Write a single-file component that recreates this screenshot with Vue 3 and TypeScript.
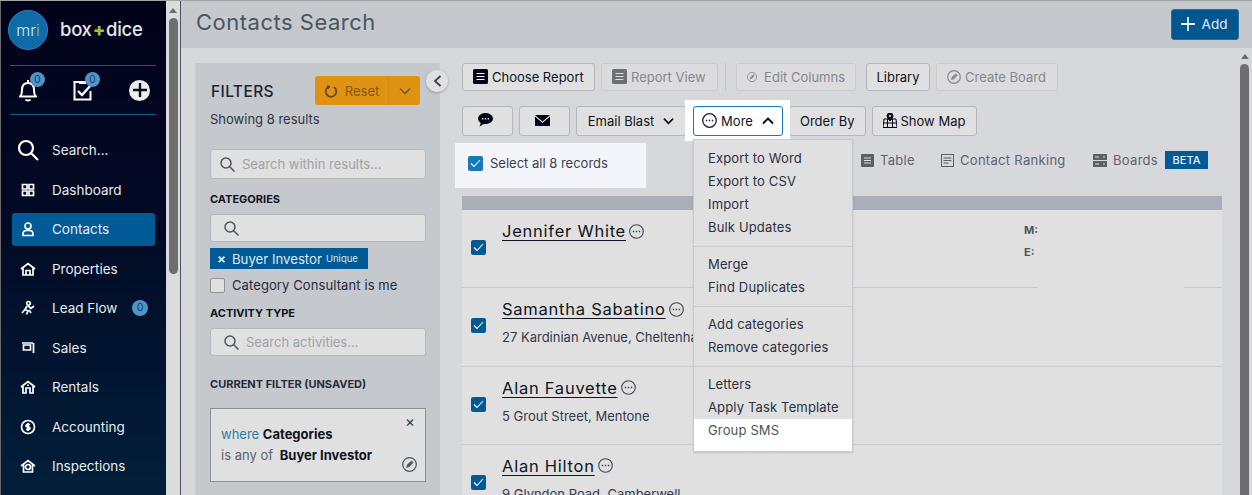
<template>
    <div class="page">
        <aside class="sidebar">
            <div class="brand">
                <div class="brand__circle">m<span>r</span><span class="brand__i">i</span></div>
                <div class="brand__name">box<span class="brand__plus">+</span>dice</div>
            </div>
            <div class="quick">
                <span class="quick__item quick__item--bell">
                    <svg width="22" height="24" viewBox="0 0 22 24" fill="none" stroke="#fff" stroke-width="2">
                        <path d="M3 18.500c1.700-1.500 2-3 2-6.500 0-4 2-7 6-7s6 3 6 7c0 3.500.3 5 2 6.500z" stroke-linejoin="round" />
                        <path d="M11 2v3" />
                        <path d="M8.500 21.500c.8 1.300 4.200 1.300 5 0" />
                    </svg>
                    <span class="quick__badge">0</span>
                </span>
                <span class="quick__item quick__item--task">
                    <svg width="22" height="24" viewBox="0 0 22 24" fill="none" stroke="#fff" stroke-width="2">
                        <path d="M7 4H2.500v17.500h16V13" />
                        <path d="M7 4.500h7" stroke-width="3" />
                        <path d="M6 13l4 4 9-10" stroke-width="2.400" />
                    </svg>
                    <span class="quick__badge">0</span>
                </span>
                <span class="quick__plus">
                    <svg width="14" height="14" viewBox="0 0 14 14" stroke="#0a0a20" stroke-width="2.400">
                        <path d="M7 0v14M0 7h14" />
                    </svg>
                </span>
            </div>
            <nav class="nav">
                <div
                    v-for="item in navItems"
                    :key="item.label"
                    class="nav__item"
                    :class="{ 'nav__item--active': item.label === 'Contacts' }"
                >
                    <span class="nav__icon">
                        <svg
                            :width="item.big ? 24 : 16"
                            :height="item.big ? 24 : 16"
                            :viewBox="item.big ? '0 0 24 24' : '0 0 16 16'"
                            fill="none"
                            stroke="#fff"
                            :stroke-width="item.big ? 2.2 : 1.7"
                        >
                            <path :d="item.icon" />
                        </svg>
                    </span>
                    <span>{{ item.label }}</span>
                    <span v-if="item.badge" class="nav__badge">0</span>
                </div>
            </nav>
        </aside>

        <div class="scrollbar scrollbar--left">
            <span class="scrollbar__arrow"></span>
            <span class="scrollbar__thumb scrollbar__thumb--left"></span>
        </div>

        <main class="main">
            <header class="header">
                <h1 class="header__title">Contacts Search</h1>
                <button class="add-btn">
                    <svg width="16" height="16" viewBox="0 0 16 16" stroke="#e8eef4" stroke-width="1.800">
                        <path d="M8 1v14M1 8h14" />
                    </svg>
                    Add
                </button>
            </header>

            <div class="body">
                <section class="filters">
                    <div class="filters__top">
                        <div class="filters__title">FILTERS</div>
                        <div class="reset">
                            <span class="reset__main">
                                <svg width="14" height="14" viewBox="0 0 14 14" fill="none" stroke="#5a4a28" stroke-width="1.800">
                                    <path d="M4.200 3A5.300 5.300 0 1 0 9.800 3" />
                                    <path d="M3 1.500l3 1-2 2.500" fill="#5a4a28" stroke-width="1" />
                                </svg>
                                Reset
                            </span>
                            <span class="reset__arrow">
                                <svg width="12" height="8" viewBox="0 0 12 8" fill="none" stroke="#7a5a20" stroke-width="1.600">
                                    <path d="M1 1.500l5 5 5-5" />
                                </svg>
                            </span>
                        </div>
                    </div>
                    <div class="filters__count">Showing 8 results</div>

                    <div class="field field--tall">
                        <svg class="field__icon" width="15" height="15" viewBox="0 0 15 15" fill="none" stroke="#4c5560" stroke-width="1.500">
                            <circle cx="6" cy="6" r="5" />
                            <path d="M9.500 9.500l5 5" />
                        </svg>
                        <span class="field__hint">Search within results...</span>
                    </div>

                    <div class="filters__label filters__label--cat">CATEGORIES</div>
                    <div class="field field--inset">
                        <svg class="field__icon" width="15" height="15" viewBox="0 0 15 15" fill="none" stroke="#4c5560" stroke-width="1.500">
                            <circle cx="6" cy="6" r="5" />
                            <path d="M9.500 9.500l5 5" />
                        </svg>
                    </div>
                    <div class="tag">
                        <span class="tag__x">×</span>
                        Buyer Investor
                        <span class="tag__small">Unique</span>
                    </div>
                    <label class="consultant">
                        <span class="consultant__box"></span>
                        Category Consultant is me
                    </label>

                    <div class="filters__label filters__label--act">ACTIVITY TYPE</div>
                    <div class="field field--inset">
                        <svg class="field__icon" width="15" height="15" viewBox="0 0 15 15" fill="none" stroke="#4c5560" stroke-width="1.500">
                            <circle cx="6" cy="6" r="5" />
                            <path d="M9.500 9.500l5 5" />
                        </svg>
                        <span class="field__hint">Search activities...</span>
                    </div>

                    <div class="filters__label filters__label--cur">CURRENT FILTER (UNSAVED)</div>
                    <div class="current">
                        <div class="current__line"><span class="current__where">where</span> <b>Categories</b></div>
                        <div class="current__line"><span class="current__is">is any of</span> <b>Buyer Investor</b></div>
                        <span class="current__x">×</span>
                        <svg class="current__edit" width="15" height="15" viewBox="0 0 15 15" fill="none" stroke="#4c5560" stroke-width="1.200">
                            <circle cx="7.500" cy="7.500" r="6.800" />
                            <path d="M4.500 10.500l1-3 4-3.500 1.500 1.500-3.500 4z" fill="#4c5560" stroke-width=".6" />
                        </svg>
                    </div>

                    <button class="collapse">
                        <svg width="9" height="12" viewBox="0 0 9 12" fill="none" stroke="#2f4058" stroke-width="1.800">
                            <path d="M7.500 1l-5.500 5 5.500 5" />
                        </svg>
                    </button>
                </section>

                <section class="content">
                    <div class="toolbar">
                        <button class="btn btn--choose">
                            <svg width="15" height="15" viewBox="0 0 15 15">
                                <rect width="15" height="15" rx="1.500" fill="#05051a" />
                                <path d="M3.500 4.500h8M3.500 7.500h8M3.500 10.500h8" stroke="#fff" stroke-width="1.200" />
                            </svg>
                            Choose Report
                        </button>
                        <button class="btn btn--off btn--view">
                            <svg width="15" height="15" viewBox="0 0 15 15">
                                <rect width="15" height="15" rx="1.500" fill="#6d7074" />
                                <path d="M3.500 4.500h8M3.500 7.500h8M3.500 10.500h8" stroke="#ddd" stroke-width="1.200" />
                            </svg>
                            Report View
                        </button>
                        <span class="toolbar__divider"></span>
                        <button class="btn btn--off btn--edit">
                            <svg width="14" height="14" viewBox="0 0 15 15" fill="none" stroke="#85888c" stroke-width="1.200">
                                <circle cx="7.500" cy="7.500" r="6.800" />
                                <path d="M4.500 10.500l1-3 4-3.500 1.500 1.500-3.500 4z" fill="#85888c" stroke-width=".6" />
                            </svg>
                            Edit Columns
                        </button>
                        <button class="btn btn--library">Library</button>
                        <button class="btn btn--off btn--board">
                            <svg width="14" height="14" viewBox="0 0 15 15" fill="none" stroke="#85888c" stroke-width="1.200">
                                <circle cx="7.500" cy="7.500" r="6.800" />
                                <path d="M4.500 10.500l1-3 4-3.500 1.500 1.500-3.500 4z" fill="#85888c" stroke-width=".6" />
                            </svg>
                            Create Board
                        </button>
                    </div>

                    <div class="toolbar toolbar--two">
                        <button class="btn btn--tall btn--icon">
                            <svg width="15" height="14" viewBox="0 0 15 14">
                                <path d="M7.500 0C3.300 0 0 2.500 0 5.600c0 1.800 1.100 3.300 2.800 4.300L1.500 13.500l4.200-2.600c.6.100 1.200.2 1.800.2 4.200 0 7.500-2.500 7.500-5.500S11.700 0 7.500 0z" fill="#05051a" />
                                <path d="M4 5.700h1.400M6.800 5.700h1.400M9.600 5.700H11" stroke="#e0e0e0" stroke-width="1.500" />
                            </svg>
                        </button>
                        <button class="btn btn--tall btn--icon">
                            <svg width="15" height="11" viewBox="0 0 15 11">
                                <path d="M0 0h15L7.500 6.500z" fill="#05051a" />
                                <path d="M0 1.500l7.500 6.500L15 1.500V11H0z" fill="#05051a" />
                            </svg>
                        </button>
                        <button class="btn btn--tall btn--blast">
                            Email Blast
                            <svg width="11" height="8" viewBox="0 0 12 8" fill="none" stroke="#05051a" stroke-width="1.800">
                                <path d="M1 1.500l5 5 5-5" />
                            </svg>
                        </button>
                        <div class="more-wrap">
                            <button class="btn btn--tall btn--more">
                                <svg width="15" height="15" viewBox="0 0 15 15" fill="none" stroke="#1a2438" stroke-width="1.300">
                                    <circle cx="7.500" cy="7.500" r="6.800" />
                                    <path d="M3.800 7.500h1.400M6.800 7.500h1.400M9.800 7.500h1.400" stroke-width="1.500" />
                                </svg>
                                More
                                <svg class="btn__caret" width="12" height="8" viewBox="0 0 12 8" fill="none" stroke="#05051a" stroke-width="1.800">
                                    <path d="M1 6.500l5-5 5 5" />
                                </svg>
                            </button>
                            <div class="menu">
                                <div v-for="(group, i) in menuGroups" :key="i" class="menu__group">
                                    <div
                                        v-for="label in group"
                                        :key="label"
                                        class="menu__item"
                                        :class="{ 'menu__item--hot': label === 'Group SMS' }"
                                    >
                                        {{ label }}
                                    </div>
                                </div>
                            </div>
                        </div>
                        <button class="btn btn--tall">Order By</button>
                        <button class="btn btn--tall btn--map">
                            <svg width="14" height="15" viewBox="0 0 14 15" fill="none" stroke="#05051a" stroke-width="1">
                                <path d="M1 6h12l1 8.500H0zM.5 10h13M4.500 6v8.500M9.500 6v8.500" />
                                <path d="M7 0a3 3 0 0 1 3 3c0 1.500-2 4-3 5-1-1-3-3.500-3-5a3 3 0 0 1 3-3z" fill="#05051a" />
                                <circle cx="7" cy="3" r="1" fill="#fff" stroke="none" />
                            </svg>
                            Show Map
                        </button>
                    </div>

                    <div class="views">
                        <label class="select-all">
                            <span class="check check--light">
                                <svg width="11" height="9" viewBox="0 0 11 9" fill="none" stroke="#fff" stroke-width="1.100">
                                    <path d="M1 4.500l3 3 6-6.500" />
                                </svg>
                            </span>
                            Select all 8 records
                        </label>
                        <div class="tabs">
                            <span class="tab tab--table">
                                <svg width="13" height="13" viewBox="0 0 13 13">
                                    <rect width="13" height="13" rx="1" fill="#5c5f66" />
                                    <path d="M3 4h7M3 6.500h7M3 9h7" stroke="#ddd" stroke-width="1" />
                                </svg>
                                Table
                            </span>
                            <span class="tab tab--rank">
                                <svg width="13" height="13" viewBox="0 0 13 13" fill="none" stroke="#5c5f66" stroke-width="1">
                                    <rect x=".5" y=".5" width="12" height="12" />
                                    <path d="M2.500 4h8M2.500 6.500h8M2.500 9h5" />
                                </svg>
                                Contact Ranking
                            </span>
                            <span class="tab">
                                <svg width="14" height="13" viewBox="0 0 14 13">
                                    <rect width="14" height="6" fill="#5c5f66" />
                                    <rect y="7" width="14" height="6" fill="#5c5f66" />
                                    <path d="M2 3h4M10 3h2M2 10h4M10 10h2" stroke="#ddd" stroke-width="1" />
                                </svg>
                                Boards
                            </span>
                            <span class="beta">BETA</span>
                        </div>
                    </div>

                    <div class="table">
                        <div class="table__head"></div>
                        <div v-for="c in contacts" :key="c.name" class="row">
                            <span class="check">
                                <svg width="11" height="9" viewBox="0 0 11 9" fill="none" stroke="#fff" stroke-width="1.100">
                                    <path d="M1 4.500l3 3 6-6.500" />
                                </svg>
                            </span>
                            <div class="row__main">
                                <div class="row__title">
                                    <a class="row__name">{{ c.name }}</a>
                                    <svg width="15" height="15" viewBox="0 0 15 15" fill="none" stroke="#3d4656" stroke-width="1.100">
                                        <circle cx="7.500" cy="7.500" r="6.800" />
                                        <path d="M3.800 7.500h1.400M6.800 7.500h1.400M9.800 7.500h1.400" stroke-width="1.400" />
                                    </svg>
                                </div>
                                <div class="row__addr">{{ c.address }}</div>
                            </div>
                            <div v-if="c.phone" class="row__phones">
                                <div>M:</div>
                                <div>E:</div>
                            </div>
                            <span v-if="c.phone" class="row__gap"></span>
                        </div>
                    </div>
                </section>

                <div class="scrollbar scrollbar--right">
                    <span class="scrollbar__arrow"></span>
                    <span class="scrollbar__thumb"></span>
                </div>
            </div>
        </main>
    </div>
</template>

<script setup lang="ts">
interface NavItem {
    label: string;
    icon: string;
    big?: boolean;
    badge?: boolean;
}

const navItems: NavItem[] = [
    { label: "Search...", big: true, icon: "M10 3a7 7 0 1 0 0 14 7 7 0 0 0 0-14zM15 15l7 7" },
    { label: "Dashboard", icon: "M2.500 2.500h4.500v4.500H2.500zM9 2.500h4.500v4.500H9zM2.500 9h4.500v4.500H2.500zM9 9h4.500v4.500H9z" },
    { label: "Contacts", icon: "M8 2a3 3 0 1 0 0 6 3 3 0 0 0 0-6zM3 14.500v-1.500c0-2 1.500-3.500 3.500-3.500h3c2 0 3.500 1.500 3.500 3.500v1.500z" },
    { label: "Properties", icon: "M1 8l7-5.500L15 8M3 7v7h10V7M6 14v-4.500h4V14" },
    { label: "Lead Flow", badge: true, icon: "M8.500 1.500a1.800 1.800 0 1 0 0 3.600 1.800 1.800 0 0 0 0-3.600zM7 6l-2 3.500 3 1.500-1.500 3.500M5 9.500L2 13M8 6l3 2.500 3-2.500M9 10l2 3" },
    { label: "Sales", icon: "M2 3h11M3.500 5h7v5h-7zM13.500 3v10" },
    { label: "Rentals", icon: "M1 8l7-5.500L15 8M3 7v7h3v-5h4v5h3V7M8 5.500v1.500" },
    { label: "Accounting", icon: "M8 1.500a6.500 6.500 0 1 0 0 13 6.500 6.500 0 0 0 0-13zM10 5.500H7a1.300 1.300 0 0 0 0 2.500h2a1.300 1.300 0 0 1 0 2.500H6M8 4v8" },
    { label: "Inspections", icon: "M1 8l7-5.500L15 8M3.500 7v7h9V7M8 6.500a2.500 2.500 0 1 0 0 5 2.500 2.500 0 0 0 0-5z" },
];

const menuGroups: string[][] = [
    ["Export to Word", "Export to CSV", "Import", "Bulk Updates"],
    ["Merge", "Find Duplicates"],
    ["Add categories", "Remove categories"],
    ["Letters", "Apply Task Template", "Group SMS"],
];

const contacts = [
    { name: "Jennifer White", address: "", phone: true },
    { name: "Samantha Sabatino", address: "27 Kardinian Avenue, Cheltenham", phone: false },
    { name: "Alan Fauvette", address: "5 Grout Street, Mentone", phone: false },
    { name: "Alan Hilton", address: "9 Glyndon Road, Camberwell", phone: false },
];
</script>

<style>
html,
body {
    margin: 0;
    overflow: hidden;
}
</style>

<style scoped>
.page {
    display: flex;
    height: 495px;
    box-sizing: border-box;
    overflow: hidden;
    border-top: 1px solid #a3a3a3;
    font-family: Inter, "Liberation Sans", sans-serif;
    font-size: 13px;
    color: #333b4a;
}

button {
    font: inherit;
}

/* sidebar */
.sidebar {
    width: 166px;
    flex: none;
    box-sizing: border-box;
    border-left: 1px solid #6a6a6a;
    background: linear-gradient(180deg, #02021a 0%, #020a25 45%, #021f3a 100%);
    color: #f0f2f5;
}

.brand {
    display: flex;
    align-items: flex-start;
    height: 64px;
    box-sizing: border-box;
    padding: 9px 0 0 7px;
    gap: 12px;
}

.brand__circle {
    width: 40px;
    height: 40px;
    border-radius: 50%;
    background: #0f6ba8;
    border: 1px solid #2a86c0;
    box-sizing: border-box;
    display: flex;
    align-items: center;
    justify-content: center;
    font-size: 16px;
    font-weight: 300;
    color: #dfeaf2;
}

.brand__i {
    color: #9cc23c;
}

.brand__name {
    margin-top: 8px;
    font-size: 18.5px;
    font-weight: 500;
    letter-spacing: -0.3px;
    color: #e4e6ea;
}

.brand__plus {
    color: #9cc23c;
    font-weight: 800;
    margin: 0 1px;
}

.quick {
    position: relative;
    display: flex;
    align-items: center;
    height: 50px;
    margin: 0 10px 0 9px;
    border-top: 1px solid #0b5b96;
    border-bottom: 1px solid #0b5b96;
    box-sizing: border-box;
    padding-left: 7px;
}

.quick__item {
    position: relative;
    display: flex;
}

.quick__item--task {
    margin-left: 33px;
}

.quick__badge {
    position: absolute;
    top: -6px;
    left: 13px;
    width: 15px;
    height: 15px;
    border-radius: 50%;
    background: #4f93c9;
    color: #0d3f68;
    font-size: 10px;
    line-height: 15px;
    text-align: center;
}

.quick__plus {
    width: 21px;
    height: 21px;
    border-radius: 50%;
    background: #ececec;
    margin-left: 35px;
    display: flex;
    align-items: center;
    justify-content: center;
}

.nav {
    display: flex;
    flex-direction: column;
    gap: 6.500px;
    margin: 18.500px 11px 0 11px;
}

.nav__item {
    height: 33px;
    display: flex;
    align-items: center;
    border-radius: 3px;
    font-size: 13.5px;
    color: #e8eaee;
}

.nav__item--active {
    background: #005a96;
}

.nav__icon {
    width: 32px;
    margin-right: 8px;
    display: flex;
    justify-content: center;
    flex: none;
}

.nav__badge {
    margin-left: auto;
    margin-right: 7px;
    width: 16px;
    height: 16px;
    border-radius: 50%;
    background: #4f93c9;
    color: #0d3f68;
    font-size: 10.5px;
    line-height: 16px;
    text-align: center;
}

/* scrollbars */
.scrollbar {
    width: 14px;
    flex: none;
    display: flex;
    flex-direction: column;
    align-items: center;
    background: #dcdcdc;
}

.scrollbar--left {
    padding-top: 7px;
    box-sizing: border-box;
}

.scrollbar--right {
    width: 15px;
    background: #d7d8dc;
    padding-top: 6px;
    box-sizing: border-box;
    margin-top: -15px;
}

.scrollbar__arrow {
    border-left: 4px solid transparent;
    border-right: 4px solid transparent;
    border-bottom: 5px solid #6b6b6b;
}

.scrollbar__thumb {
    margin-top: 5px;
    width: 9px;
    flex: 1;
    border-radius: 5px 5px 0 0;
    background: #6e6e6e;
}

.scrollbar__thumb--left {
    flex: none;
    height: 256px;
    border-radius: 5px;
}

/* main */
.main {
    flex: 1;
    min-width: 0;
    display: flex;
    flex-direction: column;
    border-left: 1px solid #4c5360;
    background: #d7d8dc;
}

.header {
    height: 47px;
    flex: none;
    display: flex;
    align-items: center;
    justify-content: space-between;
    padding: 0 13px 0 15px;
    background: #c5c8cd;
}

.header__title {
    margin: 0 0 5px;
    font-size: 22px;
    font-weight: 400;
    letter-spacing: 0.5px;
    color: #4c5560;
}

.add-btn {
    width: 68px;
    height: 31px;
    display: flex;
    align-items: center;
    justify-content: center;
    gap: 6px;
    padding: 0 3px 2px 0;
    background: #00568f;
    color: #e8eef4;
    border: 1px solid #2d6d9c;
    border-radius: 3px;
    font-size: 13.5px;
}

.body {
    flex: 1;
    min-height: 0;
    display: flex;
    padding: 15px 0 0 14px;
}

/* filters */
.filters {
    position: relative;
    width: 245px;
    flex: none;
    box-sizing: border-box;
    padding: 13px 14px 0 15px;
    background: #c5c8cd;
}

.filters__top {
    display: flex;
    align-items: center;
    justify-content: space-between;
    margin-right: 6px;
}

.filters__title {
    margin: 2px 0 0 1px;
    font-size: 15.5px;
    font-weight: 500;
    letter-spacing: 0.4px;
    color: #1c2434;
}

.reset {
    display: flex;
    height: 29px;
    width: 105px;
    background: #e09312;
    border-radius: 3px;
    color: #7a5a20;
}

.reset__main {
    width: 73px;
    display: flex;
    align-items: center;
    justify-content: center;
    gap: 7px;
    border-right: 1px solid #d68c10;
}

.reset__arrow {
    flex: 1;
    display: flex;
    align-items: center;
    justify-content: center;
}

.filters__count {
    margin-top: 6px;
    line-height: 16px;
    color: #2d3543;
}

.field {
    display: flex;
    align-items: center;
    gap: 7px;
    height: 28px;
    padding-left: 9px;
    background: #e0e0e0;
    border: 1px solid #b4b7bd;
    border-radius: 3px;
    box-sizing: border-box;
    color: #a0a3a8;
}

.field--tall {
    height: 30px;
    margin-top: 22px;
}

.field--inset {
    padding-left: 13px;
}

.field__icon {
    flex: none;
}

.filters__label {
    font-size: 11px;
    font-weight: 700;
    line-height: 14px;
    color: #0e1420;
}

.filters__label--cat {
    margin-top: 13px;
    margin-bottom: 8px;
}

.filters__label--act {
    margin-top: 13px;
    margin-bottom: 8px;
}

.filters__label--cur {
    margin-top: 21px;
    color: #262d3a;
}

.tag {
    display: flex;
    align-items: center;
    gap: 4px;
    width: 158px;
    height: 21px;
    margin-top: 6px;
    padding-left: 7px;
    box-sizing: border-box;
    background: #005a96;
    color: #dfe8f0;
    font-size: 13.2px;
    white-space: nowrap;
}

.tag__x {
    margin-right: 2px;
    font-weight: 700;
}

.tag__small {
    font-size: 9.5px;
}

.consultant {
    display: flex;
    align-items: center;
    gap: 7px;
    margin-top: 8px;
    height: 16px;
    letter-spacing: 0.1px;
    color: #262d3a;
}

.consultant__box {
    width: 13px;
    height: 13px;
    background: #e0e0e0;
    border: 1px solid #8e9298;
    border-radius: 2px;
}

.current {
    position: relative;
    height: 74px;
    margin-top: 17px;
    padding: 15px 0 0 10px;
    box-sizing: border-box;
    background: #e0e0e0;
    border: 1px solid #8a8f98;
    color: #0e1420;
}

.current__line {
    line-height: 21px;
}

.current__where {
    color: #2f7aa8;
}

.current__is {
    color: #5c6470;
    margin-right: 3px;
}

.current__x {
    position: absolute;
    top: 5px;
    right: 10px;
    font-size: 15px;
    line-height: 16px;
    color: #333b4a;
}

.current__edit {
    position: absolute;
    right: 8px;
    bottom: 9px;
}

.collapse {
    position: absolute;
    top: 7px;
    right: -8px;
    width: 22px;
    height: 22px;
    padding: 0;
    display: flex;
    align-items: center;
    justify-content: center;
    border: none;
    border-radius: 50%;
    background: #e0e0e0;
    box-shadow: 0 1px 3px rgba(0, 0, 0, 0.25);
}

/* content */
.content {
    flex: 1;
    min-width: 0;
    margin-left: 22px;
    margin-right: 15px;
}

.toolbar {
    display: flex;
    align-items: center;
    gap: 6px;
    color: #0e1420;
}

.toolbar--two {
    margin-top: 15px;
}

.toolbar__divider {
    width: 1px;
    height: 28px;
    margin: 0 4px 0 1px;
    background: #c3c5c9;
}

.btn {
    height: 28px;
    display: flex;
    align-items: center;
    gap: 4px;
    padding: 0 10px 1px;
    background: #e0e0e0;
    border: 1px solid #b4b7bd;
    border-radius: 3px;
    color: #0e1420;
    font-size: 13px;
    white-space: nowrap;
}

.btn--off {
    color: #85888c;
    border-color: #c9cbcf;
    background: #dcdcde;
}

.btn--choose {
    width: 133px;
}

.btn--view {
    width: 117px;
}

.btn--edit {
    width: 120px;
    gap: 7px;
}

.btn--library {
    width: 64px;
    justify-content: center;
    margin-left: 4px;
}

.btn--board {
    width: 122px;
}

.btn--tall {
    height: 30px;
}

.btn--icon {
    width: 51px;
    justify-content: center;
    padding: 0 4px 2px 0;
}

.btn--blast {
    width: 110px;
    gap: 9px;
    justify-content: center;
    padding: 0 0 1px;
}

.btn--map {
    width: 105px;
}

.more-wrap {
    position: relative;
    display: flex;
    padding: 6px 7px 5px 8px;
    margin: -6px -7px -5px -7px;
    background: #fff;
}

.btn--more {
    width: 90px;
    justify-content: center;
    padding: 0 0 1px;
    background: #fff;
    border-color: #1679b8;
}

.btn__caret {
    margin-left: 5px;
}

.menu {
    position: absolute;
    z-index: 5;
    top: 39px;
    left: 8px;
    width: 160px;
    box-sizing: border-box;
    background: #e0e0e0;
    border: 1px solid #c8cacf;
    box-shadow: 0 1px 2px rgba(0, 0, 0, 0.12);
}

.menu__group {
    padding: 6px 0 7px;
    border-top: 1px solid #c8cacf;
}

.menu__group:first-child {
    border-top: none;
    padding-top: 7px;
}

.menu__group:last-child {
    padding-bottom: 0;
}

.menu__item {
    height: 23px;
    line-height: 23px;
    padding-left: 14px;
    letter-spacing: 0.15px;
    color: #2a3140;
    white-space: nowrap;
}

.menu__item--hot {
    height: 32px;
    background: #fff;
    color: #4c5560;
}

.views {
    display: flex;
    align-items: center;
    margin-top: 7px;
    margin-left: -7px;
    height: 45px;
}

.select-all {
    width: 191px;
    height: 45px;
    display: flex;
    align-items: center;
    gap: 7px;
    padding: 0 0 5px 13px;
    box-sizing: border-box;
    background: #f4f5fa;
    color: #3b4250;
}

.check {
    width: 15px;
    height: 15px;
    flex: none;
    display: flex;
    align-items: center;
    justify-content: center;
    border-radius: 2px;
    background: #005a96;
}

.check--light {
    background: #1679b8;
}

.tabs {
    display: flex;
    align-items: center;
    margin-left: 215px;
    margin-bottom: 11px;
    letter-spacing: 0.3px;
    color: #5c6470;
}

.tab {
    display: flex;
    align-items: center;
    gap: 6px;
}

.tab--table {
    width: 80px;
}

.tab--rank {
    width: 152px;
}

.beta {
    margin-left: 7px;
    width: 43px;
    height: 18px;
    line-height: 18px;
    text-align: center;
    background: #005a96;
    color: #e8eef4;
    font-size: 11px;
    font-weight: 500;
    letter-spacing: 0;
}

.table {
    margin-top: 8px;
}

.table__head {
    height: 14px;
    background: #a9aeb8;
}

.row {
    position: relative;
    height: 78.300px;
    display: flex;
    box-sizing: border-box;
    background: #e0e0e0;
    border-bottom: 1px solid #c8cacf;
}

.row > .check {
    margin: 30px 16px 0 9px;
}

.row__title {
    display: flex;
    align-items: center;
    gap: 3px;
    margin-top: 10px;
    height: 22px;
}

.row__name {
    font-size: 16.5px;
    letter-spacing: 0.75px;
    color: #0e1420;
    text-decoration: underline;
    text-underline-offset: 3px;
}

.row__addr {
    margin-top: 9px;
    font-size: 13px;
    color: #333b4a;
}

.row__phones {
    position: absolute;
    left: 562px;
    top: 9px;
    font-size: 11px;
    font-weight: 700;
    line-height: 22px;
    color: #4c5560;
}

.row__gap {
    position: absolute;
    left: 576px;
    bottom: -1px;
    width: 146px;
    height: 1px;
    background: #e0e0e0;
}
</style>
